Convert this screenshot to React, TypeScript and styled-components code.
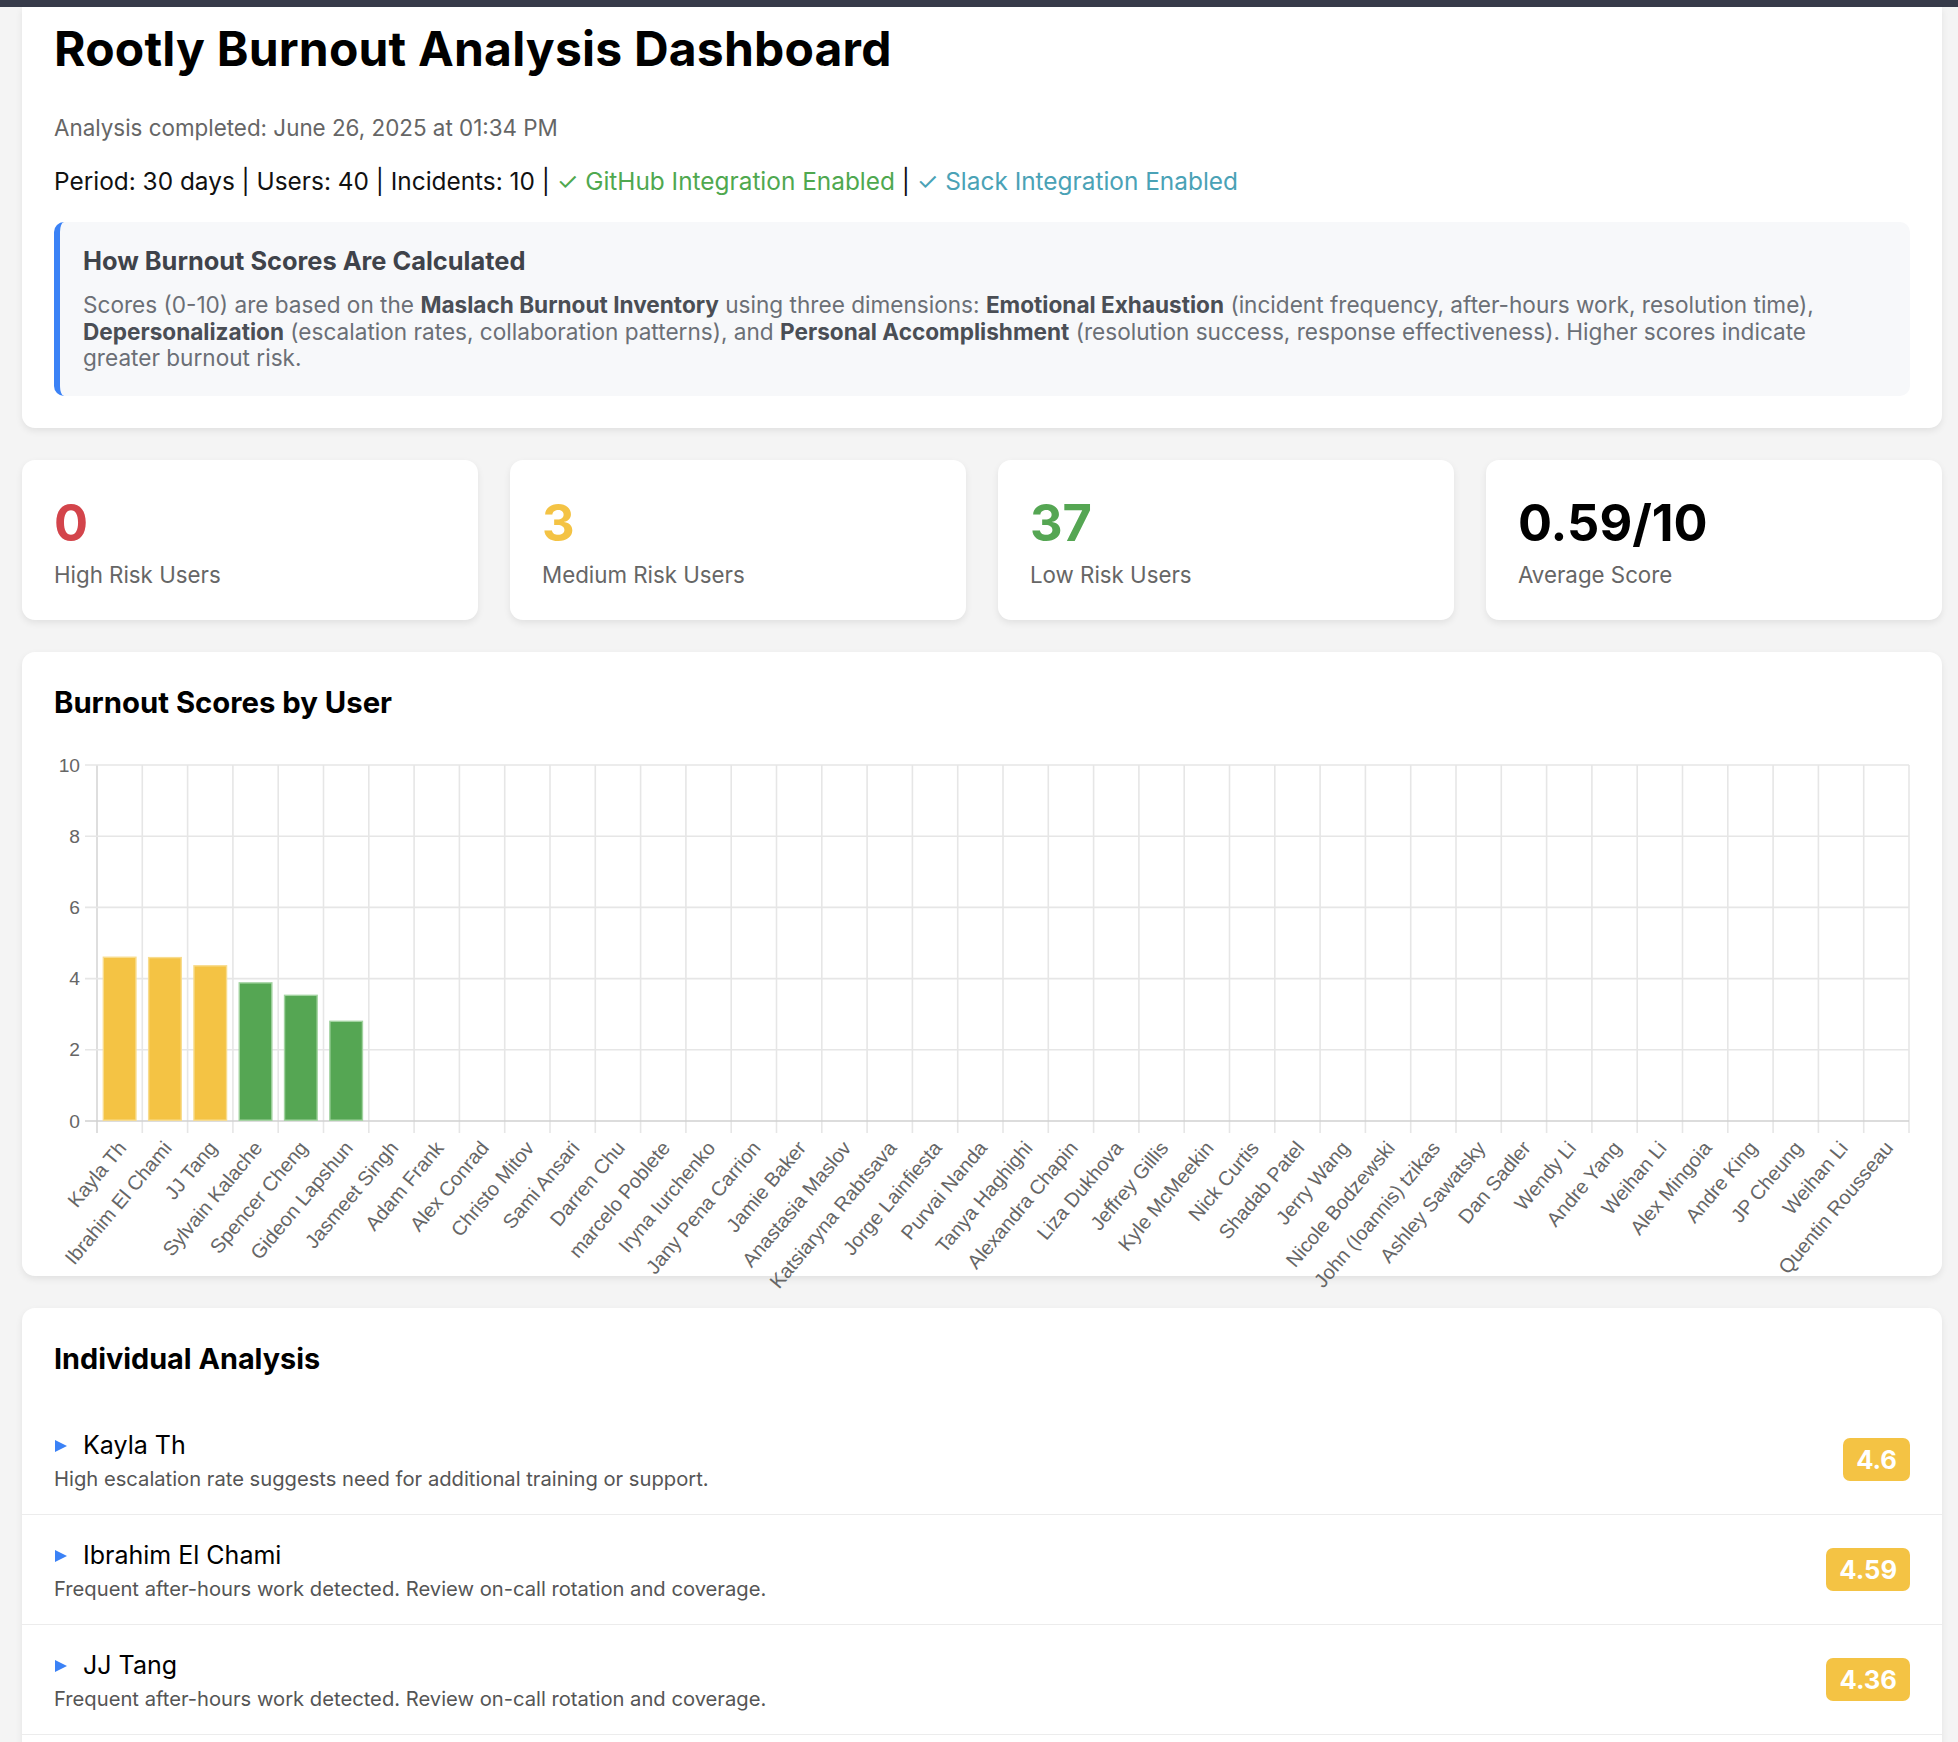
import React from 'react';
import styled, { createGlobalStyle } from 'styled-components';

const GlobalStyle = createGlobalStyle`
  html, body { margin: 0; padding: 0; background: #f4f4f4; }
  body { font-family: Inter, "Noto Sans", "Liberation Sans", sans-serif; color: #000; }
  * { box-sizing: border-box; }
`;

const COLORS = {
  red: '#d3444b',
  yellow: '#f4c344',
  green: '#55a653',
  blue: '#3b82f6',
  github: '#4fa84f',
  slack: '#4aa2b6',
};

type User = { name: string; score: number; note: string };

const users: User[] = [
  { name: 'Kayla Th', score: 4.6, note: 'High escalation rate suggests need for additional training or support.' },
  { name: 'Ibrahim El Chami', score: 4.59, note: 'Frequent after-hours work detected. Review on-call rotation and coverage.' },
  { name: 'JJ Tang', score: 4.36, note: 'Frequent after-hours work detected. Review on-call rotation and coverage.' },
  { name: 'Sylvain Kalache', score: 3.88, note: 'Frequent after-hours work detected. Review on-call rotation and coverage.' },
  { name: 'Spencer Cheng', score: 3.53, note: 'Frequent after-hours work detected. Review on-call rotation and coverage.' },
  { name: 'Gideon Lapshun', score: 2.8, note: 'Frequent after-hours work detected. Review on-call rotation and coverage.' },
];

const zeroNames = [
  'Jasmeet Singh', 'Adam Frank', 'Alex Conrad', 'Christo Mitov', 'Sami Ansari', 'Darren Chu',
  'marcelo Poblete', 'Iryna Iurchenko', 'Jany Pena Carrion', 'Jamie Baker', 'Anastasia Maslov',
  'Katsiaryna Rabtsava', 'Jorge Lainfiesta', 'Purvai Nanda', 'Tanya Haghighi', 'Alexandra Chapin',
  'Liza Dukhova', 'Jeffrey Gillis', 'Kyle McMeekin', 'Nick Curtis', 'Shadab Patel', 'Jerry Wang',
  'Nicole Bodzewski', 'John (Ioannis) tzikas', 'Ashley Sawatsky', 'Dan Sadler', 'Wendy Li',
  'Andre Yang', 'Weihan Li', 'Alex Mingoia', 'Andre King', 'JP Cheung', 'Weihan Li', 'Quentin Rousseau',
];

const chartData = [
  ...users.map((u) => ({ name: u.name, score: u.score })),
  ...zeroNames.map((n) => ({ name: n, score: 0 })),
];

const riskColor = (s: number) => (s >= 7 ? COLORS.red : s >= 4 ? COLORS.yellow : COLORS.green);
const riskBorder = (s: number) => (s >= 7 ? '#e89a9e' : s >= 4 ? '#f8dc8e' : '#a2d3a0');

const TopBar = styled.div`
  height: 7px;
  background: #373b4a;
`;

const Page = styled.main`
  width: 1920px;
  margin-left: 22px;
  display: flex;
  flex-direction: column;
  gap: 32px;
  padding-bottom: 60px;
`;

const Card = styled.section`
  background: #fff;
  border-radius: 13px;
  box-shadow: 0 3px 7px rgba(0, 0, 0, 0.08);
`;

const HeaderCard = styled(Card)`
  border-radius: 0 0 13px 13px;
  padding: 13px 32px 32px 32px;
`;

const Title = styled.h1`
  margin: 0;
  font-size: 48px;
  line-height: 58px;
  font-weight: 700;
  letter-spacing: 0.2px;
  color: #000;
`;

const Completed = styled.p`
  margin: 36px 0 0;
  font-size: 22.4px;
  line-height: 27px;
  color: #666;
`;

const Meta = styled.p`
  margin: 26px 0 0;
  font-size: 24.4px;
  line-height: 29px;
  color: #111;
`;

const Integration = styled.span<{ $color: string }>`
  color: ${(p) => p.$color};
`;

const InfoBox = styled.div`
  margin-top: 26px;
  background: #f7f8fa;
  border-left: 6px solid ${COLORS.blue};
  border-radius: 10px;
  padding: 24px 24px 24px 23px;
`;

const InfoTitle = styled.h3`
  margin: 0;
  font-size: 25.4px;
  line-height: 30px;
  font-weight: 700;
  color: #3f434a;
`;

const InfoText = styled.p`
  margin: 16px 0 0;
  font-size: 22.6px;
  line-height: 26.7px;
  color: #6b6f76;
  strong { color: #4a4e55; font-weight: 700; }
`;

const StatsGrid = styled.div`
  display: grid;
  grid-template-columns: repeat(4, 1fr);
  gap: 32px;
`;

const StatCard = styled(Card)`
  padding: 32px;
`;

const StatValue = styled.div<{ $color: string }>`
  font-size: 50.5px;
  line-height: 62px;
  font-weight: 700;
  color: ${(p) => p.$color};
`;

const StatLabel = styled.div`
  margin-top: 7px;
  font-size: 22.3px;
  line-height: 27px;
  color: #666;
`;

const ChartCard = styled(Card)`
  padding: 32px;
`;

const SectionTitle = styled.h2<{ $size?: number }>`
  margin: 0;
  font-size: ${(p) => p.$size ?? 29}px;
  line-height: 38px;
  font-weight: 700;
  color: #000;
`;

const ChartSvg = styled.svg`
  display: block;
  margin-top: 20px;
  overflow: visible;
`;

const AnalysisCard = styled(Card)`
  padding-top: 32px;
  overflow: hidden;
`;

const AnalysisTitle = styled(SectionTitle)`
  padding: 0 32px;
`;

const RowList = styled.div`
  margin-top: 27px;
`;

const Row = styled.div`
  display: flex;
  align-items: center;
  justify-content: space-between;
  padding: 23px 32px;
  border-bottom: 1px solid #ececec;
`;

const RowMain = styled.div`
  display: flex;
  flex-direction: column;
  padding-top: 3px;
`;

const NameLine = styled.div`
  display: flex;
  align-items: center;
  gap: 16px;
`;

const Caret = styled.span`
  width: 0;
  height: 0;
  margin-left: 1px;
  border-top: 6.5px solid transparent;
  border-bottom: 6.5px solid transparent;
  border-left: 12px solid ${COLORS.blue};
`;

const Name = styled.span`
  font-size: 25px;
  line-height: 29px;
  color: #000;
`;

const Note = styled.div`
  margin-top: 6px;
  font-size: 20.2px;
  line-height: 25px;
  color: #555;
`;

const Badge = styled.span<{ $color: string }>`
  background: ${(p) => p.$color};
  color: #fff;
  font-weight: 700;
  font-size: 25.6px;
  line-height: 31px;
  padding: 6px 13px;
  border-radius: 7px;
`;

const AxisText = styled.text`
  font-family: "Liberation Sans", Arial, sans-serif;
  fill: #666;
`;

const W = 1856;
const H = 502;
const X0 = 43;
const X1 = 1855;
const Y0 = 23;
const Y1 = 379;
const N = chartData.length;
const CW = (X1 - X0) / N;
const yPos = (v: number) => Y1 - (v / 10) * (Y1 - Y0);

function BurnoutChart() {
  const yTicks = [0, 2, 4, 6, 8, 10];
  return (
    <ChartSvg width={W} height={H} viewBox={`0 0 ${W} ${H}`}>
      {Array.from({ length: N + 1 }, (_, i) => {
        const x = X0 + i * CW;
        return <line key={`v${i}`} x1={x} x2={x} y1={Y0} y2={Y1 + 12} stroke={i === 0 ? '#d6d6d6' : '#e6e6e6'} strokeWidth={1.6} />;
      })}
      {yTicks.map((t) => (
        <g key={`h${t}`}>
          <line x1={X0 - 12} x2={X1} y1={yPos(t)} y2={yPos(t)} stroke={t === 0 ? '#d0d0d0' : '#e6e6e6'} strokeWidth={1.6} />
          <AxisText x={X0 - 17} y={yPos(t)} textAnchor="end" dominantBaseline="central" fontSize={19.2}>
            {t}
          </AxisText>
        </g>
      ))}
      {chartData.map((d, i) => {
        if (d.score <= 0) return null;
        const bw = CW * 0.72;
        const x = X0 + (i + 0.5) * CW - bw / 2;
        const y = yPos(d.score);
        return (
          <rect key={`b${i}`} x={x} y={y} width={bw} height={Y1 - y - 0.8} fill={riskColor(d.score)} stroke={riskBorder(d.score)} strokeWidth={1.4} />
        );
      })}
      {chartData.map((d, i) => {
        const cx = X0 + (i + 0.5) * CW + 2.5;
        const cy = Y1 + 23;
        return (
          <AxisText key={`l${i}`} x={cx} y={cy} textAnchor="end" dominantBaseline="central" fontSize={20} transform={`rotate(-50 ${cx} ${cy})`}>
            {d.name}
          </AxisText>
        );
      })}
    </ChartSvg>
  );
}

export default function App() {
  return (
    <>
      <GlobalStyle />
      <TopBar />
      <Page>
        <HeaderCard>
          <Title>Rootly Burnout Analysis Dashboard</Title>
          <Completed>Analysis completed: June 26, 2025 at 01:34 PM</Completed>
          <Meta>
            Period: 30 days | Users: 40 | Incidents: 10 |{' '}
            <Integration $color={COLORS.github}>✓ GitHub Integration Enabled</Integration> |{' '}
            <Integration $color={COLORS.slack}>✓ Slack Integration Enabled</Integration>
          </Meta>
          <InfoBox>
            <InfoTitle>How Burnout Scores Are Calculated</InfoTitle>
            <InfoText>
              Scores (0-10) are based on the <strong>Maslach Burnout Inventory</strong> using three dimensions:{' '}
              <strong>Emotional Exhaustion</strong> (incident frequency, after-hours work, resolution time),
              <br />
              <strong>Depersonalization</strong> (escalation rates, collaboration patterns), and{' '}
              <strong>Personal Accomplishment</strong> (resolution success, response effectiveness). Higher scores indicate
              <br />
              greater burnout risk.
            </InfoText>
          </InfoBox>
        </HeaderCard>

        <StatsGrid>
          <StatCard>
            <StatValue $color={COLORS.red}>0</StatValue>
            <StatLabel>High Risk Users</StatLabel>
          </StatCard>
          <StatCard>
            <StatValue $color={COLORS.yellow}>3</StatValue>
            <StatLabel>Medium Risk Users</StatLabel>
          </StatCard>
          <StatCard>
            <StatValue $color={COLORS.green}>37</StatValue>
            <StatLabel>Low Risk Users</StatLabel>
          </StatCard>
          <StatCard>
            <StatValue $color="#000">0.59/10</StatValue>
            <StatLabel>Average Score</StatLabel>
          </StatCard>
        </StatsGrid>

        <ChartCard>
          <SectionTitle $size={29.3}>Burnout Scores by User</SectionTitle>
          <BurnoutChart />
        </ChartCard>

        <AnalysisCard>
          <AnalysisTitle $size={28.8}>Individual Analysis</AnalysisTitle>
          <RowList>
            {users.map((u, i) => (
              <Row key={i}>
                <RowMain>
                  <NameLine>
                    <Caret />
                    <Name>{u.name}</Name>
                  </NameLine>
                  <Note>{u.note}</Note>
                </RowMain>
                <Badge $color={riskColor(u.score)}>{u.score}</Badge>
              </Row>
            ))}
          </RowList>
        </AnalysisCard>
      </Page>
    </>
  );
}
